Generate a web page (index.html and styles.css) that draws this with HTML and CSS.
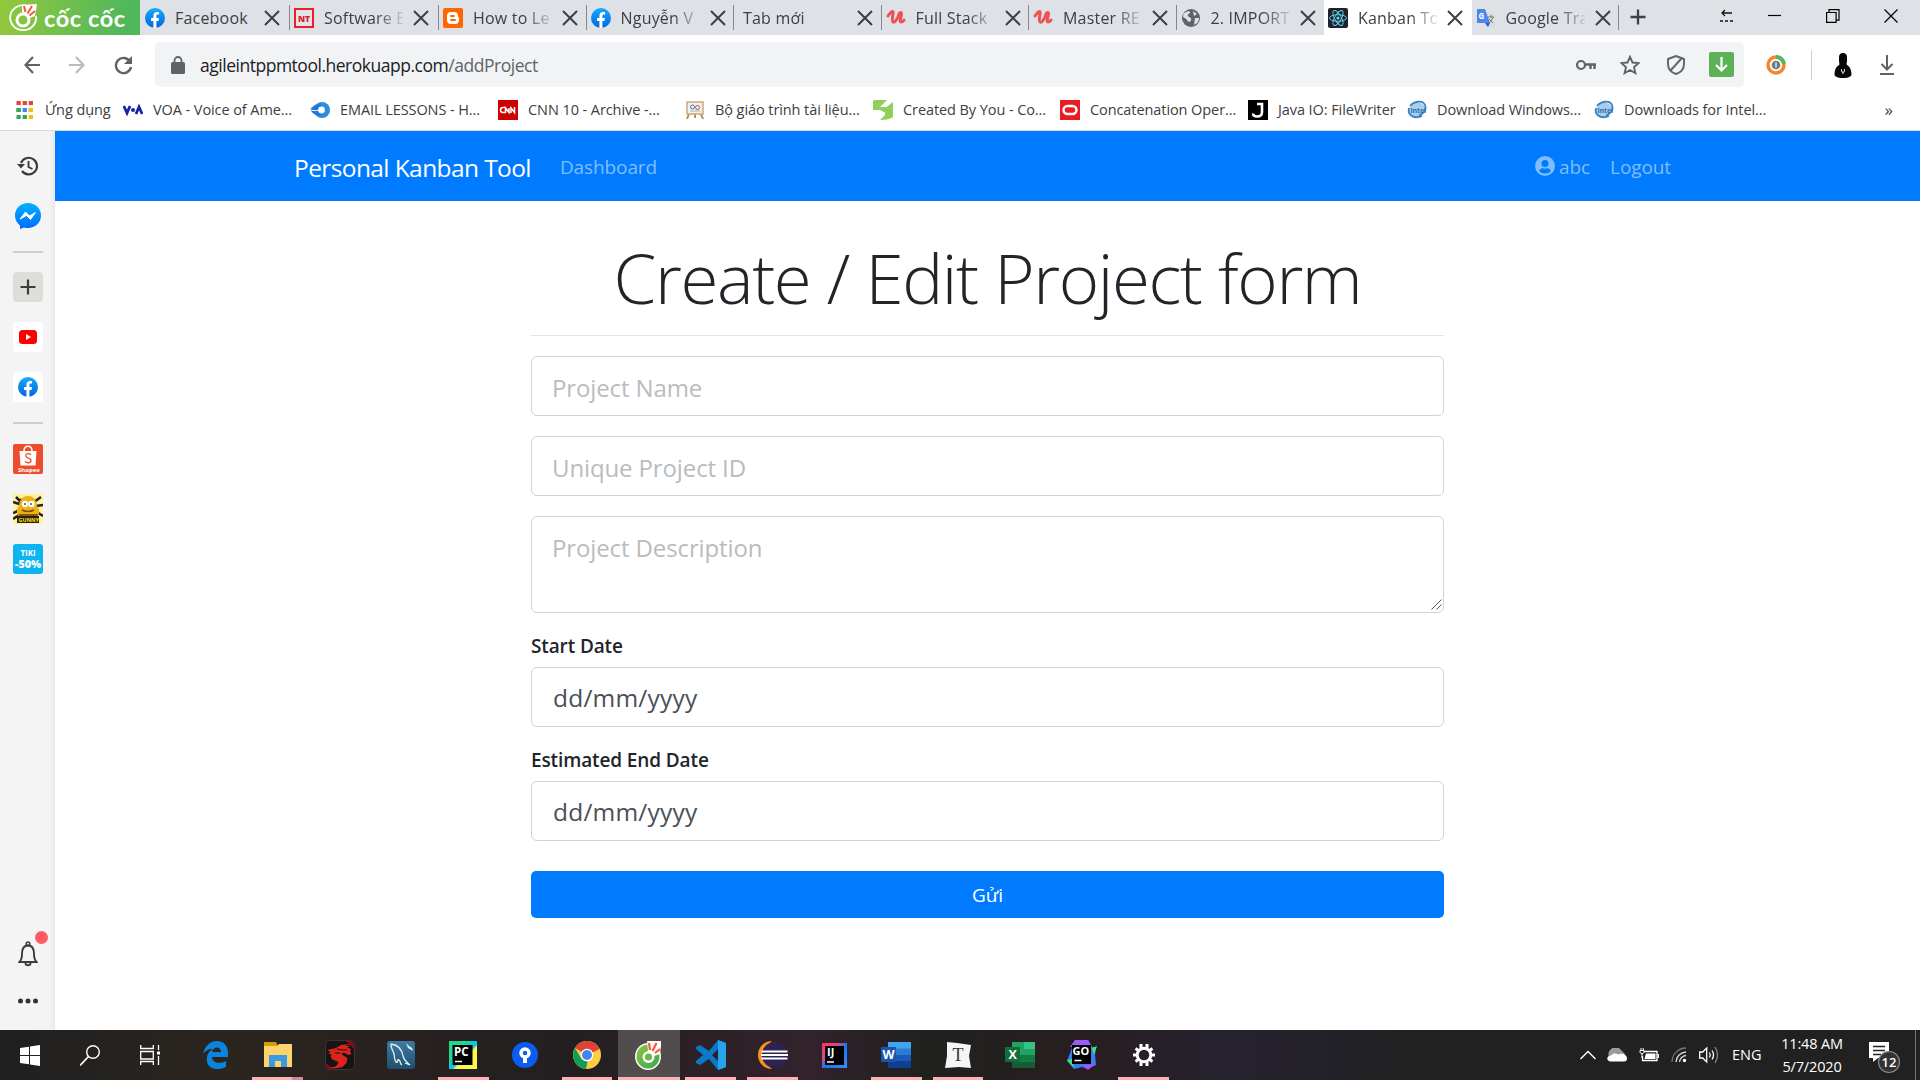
FILE: index.html
```html
<!DOCTYPE html>
<html lang="vi">
<head>
<meta charset="utf-8">
<title>Kanban Tool</title>
<link rel="stylesheet" href="styles.css">
</head>
<body>
<svg class="defs" width="0" height="0" aria-hidden="true">
  <defs>
    <linearGradient id="g-fb" x1="0" y1="0" x2="0" y2="1"><stop offset="0" stop-color="#18acfe"/><stop offset="1" stop-color="#0163e0"/></linearGradient>
    <linearGradient id="g-ms" x1="0" y1="0" x2="0" y2="1"><stop offset="0" stop-color="#00b2ff"/><stop offset="1" stop-color="#006aff"/></linearGradient>
    <linearGradient id="g-my" x1="0" y1="0" x2="0" y2="1"><stop offset="0" stop-color="#3d7ba3"/><stop offset="1" stop-color="#1f4f6c"/></linearGradient>
    <linearGradient id="g-pc" x1="0" y1="0" x2="1" y2="1"><stop offset=".3" stop-color="#21d789"/><stop offset=".55" stop-color="#07c3f2"/><stop offset=".6" stop-color="#fcf84a"/></linearGradient>
    <linearGradient id="g-ij" x1="0" y1="0" x2="1" y2="1"><stop offset="0" stop-color="#fe315d"/><stop offset=".3" stop-color="#e8457a"/><stop offset=".55" stop-color="#087cfa"/><stop offset="1" stop-color="#3f8cf0"/></linearGradient>
    <linearGradient id="g-cc" x1="0" y1="0" x2="1" y2="1"><stop offset="0" stop-color="#8cc63f"/><stop offset="1" stop-color="#3aa655"/></linearGradient>
  </defs>
  <symbol id="close" viewBox="0 0 16 16"><path d="M1 1l14 14M15 1L1 15" stroke="#3c4043" stroke-width="2" fill="none"/></symbol>
  <symbol id="fb" viewBox="0 0 20 20"><circle cx="10" cy="10" r="10" fill="url(#g-fb)"/><path d="M8.400 20v-7H6v-3h2.400V7.900c0-2.600 1.400-3.900 3.700-3.900.9 0 1.900.2 1.900.2v2.400h-1.200c-1.100 0-1.400.7-1.400 1.400v2H14l-.5 3h-2.100v7z" fill="#fff"/></symbol>
  <symbol id="udemy" viewBox="0 0 20 20"><path d="M2 8c2-3 4-5 5-4.500S5 13 7 14s5-4 6-8c.6-2 2.500-2 2.500 0S13 14 15 14s2-1 3-2" stroke="#ec5252" stroke-width="3" fill="none" stroke-linecap="round"/></symbol>
  <symbol id="intel" viewBox="0 0 20 20"><ellipse cx="10" cy="10" rx="8.500" ry="7" fill="#a9cdea" transform="rotate(-20 10 10)"/><path d="M3 6C7 1 16 0 18 5s-2 9-6 10.500M2 8c-2 8 6 11 13 8" stroke="#3784c5" stroke-width="1.800" fill="none"/><text x="3.500" y="12.500" font-size="7" font-weight="bold" fill="#2f6fad">intel</text></symbol>
</svg>

<div class="browser">
  <header class="tabs">
    <div class="logo">
      <svg width="30" height="30" viewBox="0 0 30 30"><path d="M17 2.500A13 12.500 0 1 0 27 13" fill="none" stroke="#fff" stroke-width="1.800"/><path d="M13 2l15-1-2 12-5 2-8-6z" fill="#fff"/><circle cx="14" cy="17" r="6" fill="#83c340" stroke="#fff" stroke-width="3"/><path d="M16.500 9L15 3M18.500 10.500L23 3M20.500 12.500L26 8" stroke="#f15a3a" stroke-width="2"/></svg>
      <span class="brand">cốc cốc</span>
    </div>
    <div class="tab wide"><svg class="fav"><use href="#fb"/></svg><span class="ttl">Facebook</span><svg class="x"><use href="#close"/></svg></div>
    <div class="tab wide"><svg class="fav" viewBox="0 0 20 20"><path d="M1 1h18v18H1z" fill="#e6e2e6" stroke="#e3212f" stroke-width="2"/><text x="4" y="13.500" font-size="8.500" font-weight="900" fill="#d5202c">NT</text></svg><span class="ttl">Software E</span><svg class="x"><use href="#close"/></svg></div>
    <div class="tab"><svg class="fav" viewBox="0 0 20 20"><rect width="20" height="20" rx="2" fill="#ff6600"/><path d="M4 8a4 4 0 0 1 4-4h3a4 4 0 0 1 4 4c0 1 1 1 1 2v2a4 4 0 0 1-4 4H8a4 4 0 0 1-4-4z" fill="#fff"/><path d="M8 8h3M8 12h4" stroke="#ff6600" stroke-width="1.800" stroke-linecap="round"/></svg><span class="ttl">How to Le</span><svg class="x"><use href="#close"/></svg></div>
    <div class="tab"><svg class="fav"><use href="#fb"/></svg><span class="ttl">Nguyễn V</span><svg class="x"><use href="#close"/></svg></div>
    <div class="tab plain"><span class="ttl">Tab mới</span><svg class="x"><use href="#close"/></svg></div>
    <div class="tab"><svg class="fav"><use href="#udemy"/></svg><span class="ttl">Full Stack</span><svg class="x"><use href="#close"/></svg></div>
    <div class="tab"><svg class="fav"><use href="#udemy"/></svg><span class="ttl">Master RE</span><svg class="x"><use href="#close"/></svg></div>
    <div class="tab noline"><svg class="fav" viewBox="0 0 20 20"><circle cx="10" cy="10" r="9" fill="#5f6368"/><path d="M5 4c3-2 5 0 4 1S6 6 7 8s4 1 3 4-3 2-4 0-4-2-4-4 1-3 3-4zM12 3l4 3-3 2zM14 10h4c0 4-3 6-5 7z" fill="#dee1e6"/></svg><span class="ttl">2. IMPORT</span><svg class="x"><use href="#close"/></svg></div>
    <div class="tab active"><svg class="fav" viewBox="0 0 20 20"><rect width="20" height="20" rx="2" fill="#20232a"/><g fill="none" stroke="#61dafb" stroke-width=".9"><ellipse cx="10" cy="10" rx="8.500" ry="3.300"/><ellipse cx="10" cy="10" rx="8.500" ry="3.300" transform="rotate(60 10 10)"/><ellipse cx="10" cy="10" rx="8.500" ry="3.300" transform="rotate(120 10 10)"/></g><circle cx="10" cy="10" r="1.600" fill="#61dafb"/></svg><span class="ttl">Kanban To</span><svg class="x"><use href="#close"/></svg></div>
    <div class="tab"><svg class="fav" viewBox="0 0 20 20"><path d="M9 5h10v14h-8z" fill="#dcdcdc"/><path d="M1 1h8l5 14H1z" fill="#4a86f0"/><path d="M9 15h5l-2 4z" fill="#2c57c8"/><text x="2.500" y="10.500" font-size="8" font-weight="bold" fill="#fff">G</text><path d="M12 9h6M15 7v2M17 9c-1 3-2 4-4 6M13 11l4 4" stroke="#707a80" fill="none"/></svg><span class="ttl">Google Tra</span><svg class="x"><use href="#close"/></svg></div>
    <svg class="newtab" width="16" height="16" viewBox="0 0 16 16"><path d="M8 .500v15M.5 8h15" stroke="#3c4043" stroke-width="2.300"/></svg>
    <div class="winbtns">
      <svg width="14" height="14" viewBox="0 0 14 14"><path d="M12 4H2M5 1L2 4l3 3" fill="none" stroke="#111" stroke-width="1.300"/><path d="M0 12h13.500" stroke="#111" stroke-width="1.700" stroke-dasharray="3 2"/></svg>
      <svg width="14" height="14" viewBox="0 0 14 14"><path d="M0 6.500h13" stroke="#000" stroke-width="1.200"/></svg>
      <svg width="14" height="14" viewBox="0 0 14 14"><path d="M.6 3.500h9.500v9.900H.6zM3 3.500V.6h10v10.500h-2.900" fill="none" stroke="#000" stroke-width="1.200"/></svg>
      <svg width="14" height="14" viewBox="0 0 14 14"><path d="M.5.500l13 13M13.500.500l-13 13" stroke="#000" stroke-width="1.200"/></svg>
    </div>
  </header>

  <div class="toolbar">
    <svg width="16" height="18" viewBox="0 0 16 18"><path d="M16 9H1.500M9 1L1.500 9 9 17" fill="none" stroke="#5f6368" stroke-width="2.200"/></svg>
    <svg width="16" height="18" viewBox="0 0 16 18"><path d="M0 9h14.500M7 1l7.500 8L7 17" fill="none" stroke="#babcbe" stroke-width="2.200"/></svg>
    <svg width="19" height="19" viewBox="0 0 19 19"><path d="M16 5.500A7.600 7.600 0 1 0 17 11" fill="none" stroke="#5f6368" stroke-width="2.400"/><path d="M18 0v8h-8z" fill="#5f6368"/></svg>
    <div class="omnibox">
      <svg width="14" height="18" viewBox="0 0 14 18"><rect y="6" width="14" height="12" rx="1.500" fill="#5f6368"/><path d="M3.500 7V4.500a3.500 3.500 0 0 1 7 0V7" fill="none" stroke="#5f6368" stroke-width="1.800"/></svg>
      <span class="url"><b>agileintppmtool.herokuapp.com</b>/addProject</span>
      <div class="omni-icons">
        <svg width="20" height="12" viewBox="0 0 20 12"><circle cx="5" cy="6" r="4" fill="none" stroke="#5f6368" stroke-width="2.200"/><path d="M9 5.500h11M14.500 5.500v4.500M18.500 5.500v4.500" stroke="#5f6368" stroke-width="2.400"/></svg>
        <svg width="20" height="20" viewBox="0 0 20 20"><path d="M10 1.800l2.500 5.700 6.100.6-4.600 4.100 1.400 6L10 15l-5.400 3.200 1.400-6L1.400 8.100l6.100-.6z" fill="none" stroke="#5f6368" stroke-width="1.900"/></svg>
        <svg width="20" height="20" viewBox="-2 0 20 20"><path d="M9 1l8 3v5c0 5-3.500 8.500-8 10-4.500-1.500-8-5-8-10V4zM3.500 15.500l11-12" fill="none" stroke="#5f6368" stroke-width="1.900"/></svg>
        <svg width="25" height="25" viewBox="0 0 25 25"><rect width="25" height="25" rx="2" fill="#5cb357"/><path d="M12.500 5v13M7 13l5.500 5.500L18 13" fill="none" stroke="#fff" stroke-width="2.200"/></svg>
      </div>
    </div>
    <div class="exts">
      <svg width="20" height="20" viewBox="0 0 20 20"><circle cx="10" cy="10" r="8" fill="none" stroke="#f5842a" stroke-width="3.400"/><path d="M10 2a8 8 0 0 1 8 7" fill="none" stroke="#56b45d" stroke-width="4"/><circle cx="10" cy="10" r="4.300" fill="#777"/><path d="M10 7.500v5" stroke="#fff" stroke-width="1.200"/></svg>
      <i class="vline"></i>
      <svg class="person" width="18" height="25" viewBox="0 0 18 25"><path d="M9 0c3 0 4 2 4 4v4c0 2-1 3 0 4 4 3 4 5 4.500 9 .2 2-2 4-8.500 4S.3 23 .5 21C1 17 1 15 5 12c1-1 0-2 0-4V4c0-2 1-4 4-4z" fill="#080808"/><path d="M7.500 16v2c0 2 3 2 3 0v-2M9 18v3" stroke="#ddd" fill="none"/></svg>
      <svg width="14" height="20" viewBox="0 0 14 20"><path d="M7 0v14M1.500 9L7 14.500 12.500 9M0 19h14" fill="none" stroke="#5f6368" stroke-width="2"/></svg>
    </div>
  </div>

  <nav class="bookmarks">
    <div class="bm"><svg width="20" height="20" viewBox="0 0 20 20"><path d="M1.500 3h16.500" stroke="#ea4335" stroke-width="4" stroke-dasharray="4.300 1.800"/><path d="M1.500 10h16.500" stroke="#4285f4" stroke-width="4" stroke-dasharray="4.300 1.800"/><path d="M1.500 10h4.300M1.500 17h10.400" stroke="#34a853" stroke-width="4" stroke-dasharray="4.300 1.800"/><path d="M13.700 10H18M13.700 17H18" stroke="#fbbc05" stroke-width="4"/></svg><span>Ứng dụng</span></div>
    <div class="bm"><svg width="20" height="20" viewBox="0 0 20 20"><path d="M.8 6L4 13l3-7M13 14l3-7 3.200 7" fill="none" stroke="#1a22a8" stroke-width="2.800"/><circle cx="10" cy="10" r="2" fill="#1a22a8"/></svg><span>VOA - Voice of Ame...</span></div>
    <div class="bm"><svg width="20" height="20" viewBox="0 0 20 20"><circle cx="12" cy="10" r="8" fill="#2d8be0"/><path d="M0 9l5-4 6-.5v11C5 16 2 13 0 9z" fill="#1f78d1"/><circle cx="11.500" cy="10" r="3.400" fill="#fff"/><path d="M0 9c3 2 5 2 9 1" stroke="#fff" fill="none"/></svg><span>EMAIL LESSONS - H...</span></div>
    <div class="bm"><svg width="20" height="20" viewBox="0 0 20 20"><path d="M0 0h20v20H0z" fill="#c00"/><path d="M7 7.500H5q-2.500 0-2.500 2.500t2.500 2.500h2.500V8l3.500 4.500V8M13 13V8l3.500 4.500V7" fill="none" stroke="#fff" stroke-width="1.500"/></svg><span>CNN 10 - Archive -...</span></div>
    <div class="bm"><svg width="20" height="20" viewBox="0 0 20 20"><path d="M4 14L2 19M16 14l2 5M10 14v4M2 3h16" stroke="#b98b60" stroke-width="2"/><path d="M2 2h16v12H2z" fill="#edf0ee" stroke="#d0a67c" stroke-width="1.500"/><circle cx="7.500" cy="7" r="2" fill="none" stroke="#497cab"/><circle cx="12.500" cy="7.500" r="2" fill="none" stroke="#d34747"/><path d="M5 11h10" stroke="#a7b5bd"/></svg><span>Bộ giáo trình tài liệu...</span></div>
    <div class="bm"><svg width="20" height="20" viewBox="0 0 20 20"><path d="M0 1Q0 0 5 0h9L7 7h6v6L7 10H0zM20 2v15q-3 3-13 3l5-5V9h-1z" fill="#8fd05b"/></svg><span>Created By You - Co...</span></div>
    <div class="bm"><svg width="20" height="20" viewBox="0 0 20 20"><path d="M0 0h20v20H0z" fill="#ea1b22"/><rect x="3.500" y="6" width="13" height="8" rx="4" fill="none" stroke="#fff" stroke-width="2.400"/></svg><span>Concatenation Oper...</span></div>
    <div class="bm"><svg width="20" height="20" viewBox="0 0 20 20"><path d="M0 0h20v20H0z"/><path d="M9 4h5v8q0 4.500-5 4.500-4 0-4-3" fill="none" stroke="#fff" stroke-width="2.600"/></svg><span>Java IO: FileWriter</span></div>
    <div class="bm"><svg width="20" height="20"><use href="#intel"/></svg><span>Download Windows...</span></div>
    <div class="bm"><svg width="20" height="20"><use href="#intel"/></svg><span>Downloads for Intel...</span></div>
    <div class="more">»</div>
  </nav>

  <div class="main">
    <aside class="side">
      <svg width="21" height="20" viewBox="0 0 21 20"><path d="M4 7a8.300 8.300 0 1 1 1 8" fill="none" stroke="#3c3c3c" stroke-width="2.200"/><path d="M0 8h8l-4 4.500z" fill="#3c3c3c"/><path d="M11.500 5v6l4 2" fill="none" stroke="#3c3c3c" stroke-width="1.900"/></svg>
      <svg class="s-ms" width="26" height="26" viewBox="0 0 26 26"><path d="M13 0c7 0 13 5 13 12.500S20 25 13 25c-1.500 0-3-.2-4-.6L5 26v-3.500C2 20 0 17 0 12.500 0 5 6 0 13 0z" fill="url(#g-ms)"/><path d="M5 16l5.500-7 4 4L20.500 9.500 15.500 16.500l-4-4z" fill="#fff" stroke="#fff"/></svg>
      <i class="rule r1"></i>
      <div class="tile plus"><svg width="16" height="16" viewBox="0 0 16 16"><path d="M8 .5v15M.5 8h15" stroke="#3c3c3c" stroke-width="2.200"/></svg></div>
      <div class="tile"><svg width="18" height="14" viewBox="0 0 18 14"><rect width="18" height="14" rx="3.500" fill="red"/><path d="M7 4l5 3-5 3z" fill="#fff"/></svg></div>
      <div class="tile"><svg width="20" height="20"><use href="#fb"/></svg></div>
      <i class="rule r2"></i>
      <svg class="s-app" width="30" height="30" viewBox="0 0 30 30"><rect width="30" height="30" rx="2" fill="#ee4d2d"/><path d="M6.500 7h17l-1 14.500h-15z" fill="#fff"/><path d="M11 7c0-6.500 8-6.500 8 0" fill="none" stroke="#fff" stroke-width="1.500"/><path d="M18 10.500c-4-2-6 0-5 2s5 1.500 5 4-4 3-6 1" fill="none" stroke="#ee4d2d" stroke-width="1.400"/><text x="5" y="28" font-size="6" font-weight="bold" fill="#fff">Shopee</text></svg>
      <svg class="s-app" width="30" height="30" viewBox="0 0 30 30"><path d="M0 0h30v30H0z" fill="#fff3a0"/><path d="M0 8l6 2 3-5M0 19l9-4M21 8l7-5M23 12l7-1M22 17l8 5M0 25l6-4M3 3l5 5" stroke="#222" stroke-width="2.500" fill="none"/><path d="M15 2c6 0 9 5 9 10 2 2 3 6 1 10H5c-2-4-1-8 1-10 0-5 3-10 9-10z" fill="#efb11c"/><path d="M5 20h20l-1 3H7z" fill="#8a5608"/><path d="M9 16c4 2 8 2 12 0" stroke="#7a4d08" stroke-width="1.500" fill="none"/><circle cx="12" cy="10" r="3.200" fill="#fff"/><circle cx="18.500" cy="10" r="3.200" fill="#fff"/><path d="M12 9v2M18 9v2" stroke="#000"/><path d="M4 22h22v7H4z" fill="#2a2010"/><text x="5.500" y="28" font-size="5.500" font-weight="bold" fill="#ffe22a">GUNNY</text></svg>
      <svg class="s-app" width="30" height="30" viewBox="0 0 30 30"><rect width="30" height="30" rx="3" fill="#0db4ef"/><text x="15" y="12" font-size="8" text-anchor="middle" font-weight="bold" fill="#fff">TIKI</text><text x="15" y="24" font-size="10" text-anchor="middle" font-weight="800" textLength="26" lengthAdjust="spacingAndGlyphs" fill="#fff">-50%</text></svg>
      <div class="bell"><svg width="20" height="26" viewBox="0 0 20 26"><path d="M1.500 21c2-2 2.500-4 2.500-8 0-5 2-8.500 6-8.500s6 3.500 6 8.500c0 4 .5 6 2.500 8zM7.500 22c0 3 5 3 5 0" fill="none" stroke="#3c3c3c" stroke-width="1.900"/><circle cx="10" cy="2.800" r="1.800" fill="none" stroke="#3c3c3c" stroke-width="1.600"/></svg><i class="dot"></i></div>
      <svg class="dots" width="20" height="6" viewBox="0 0 20 6"><circle cx="2.500" cy="3" r="2.500" fill="#333"/><circle cx="10" cy="3" r="2.500" fill="#333"/><circle cx="17.500" cy="3" r="2.500" fill="#333"/></svg>
    </aside>

    <div class="page">
      <nav class="navbar">
        <a class="brandname">Personal Kanban Tool</a>
        <a class="link dash">Dashboard</a>
        <div class="user">
          <svg width="20" height="20" viewBox="0 0 20 20"><circle cx="10" cy="10" r="10" fill="#80bdff"/><circle cx="10" cy="7.600" r="3.500" fill="#007bff"/><path d="M4.200 15.300c.3-2 1.800-3 3.600-3 1.500.6 3 .6 4.400 0 1.800 0 3.300 1 3.600 3-3 3-8.600 3-11.600 0z" fill="#007bff"/></svg>
          <a class="link abc">abc</a>
          <a class="link logout">Logout</a>
        </div>
      </nav>
      <form class="form">
        <h1>Create / Edit Project form</h1>
        <hr>
        <div class="input">Project Name</div>
        <div class="input">Unique Project ID</div>
        <div class="input area">Project Description<svg class="grip" width="11" height="11" viewBox="0 0 11 11"><path d="M.5 10.500l10-10M5.500 10.500l5-5" stroke="#555" stroke-width="1"/></svg></div>
        <label>Start Date</label>
        <div class="input date">dd/mm/yyyy</div>
        <label>Estimated End Date</label>
        <div class="input date">dd/mm/yyyy</div>
        <button type="button">Gửi</button>
      </form>
    </div>
  </div>

  <footer class="taskbar">
    <div class="app sys"><svg width="20" height="21" viewBox="0 0 20 21"><path d="M0 3l9-1.300V10H0zM10 1.500L20 0v10H10zM0 11h9v8.300L0 18zM10 11h10v10l-10-1.500z" fill="#fff"/></svg></div>
    <div class="app sys"><svg width="20" height="21" viewBox="0 0 20 21"><circle cx="13" cy="7" r="6.300" fill="none" stroke="#fff" stroke-width="1.400"/><path d="M8.500 11.500L0 20.500" stroke="#fff" stroke-width="1.700"/></svg></div>
    <div class="app sys"><svg width="20" height="20" viewBox="0 0 20 20"><path d="M.7 0v3.500h12.600V0M.7 6.500h12.600v7.500H.7zM.7 20v-3.500h12.600V20M18.500 0v5M18.500 11v9" fill="none" stroke="#fff" stroke-width="1.300"/><path d="M17 6.500h3v3h-3z" fill="#fff"/></svg></div>
    <div class="app first"><svg width="26" height="28" viewBox="0 0 26 28"><path d="M0 13C2 4 8 0 14 0c7 0 11 5 11 12v4H9c0 5 6 8 14 4v6c-10 5-21 1-19-10 1-5 4-7 6-8-5 0-8 2-10 5zM9 11h9c0-6-8-6-9 0z" fill="#0a84dd"/></svg></div>
    <div class="app run stack"><svg width="28" height="26" viewBox="0 0 28 26"><path d="M0 0h12l2 4H0z" fill="#d99a08"/><path d="M0 4h13l2-2h13v23H0z" fill="#fdd36b"/><path d="M5 25V13h18v12h-6v-6h-6v6z" fill="#3b9be2"/></svg></div>
    <div class="app"><svg width="30" height="30" viewBox="0 0 30 30"><rect x=".5" y=".5" width="29" height="29" rx="4" fill="#171415" stroke="#3c3334"/><path d="M20 .5h6l3.500 4v5zM.5 23v3l3.500 3.500h5z" fill="#810f1d"/><path d="M2 10l9-2 5-3 9-1-5 2 5 0-3 1.500 4 1.500-1 2 1.500 3-3 1-4-2-3 0 1 2 5 3-1 5-4 4-7 1.500-6-1 6-1 3-3-1-2-5-2-2-3 1-2-3-1 2-1.500z" fill="#dc231e"/><path d="M12 9l6 1 4 0M10 13l5 0" stroke="#171415" fill="none"/></svg></div>
    <div class="app"><svg width="28" height="28" viewBox="0 0 28 28"><rect width="28" height="28" rx="3" fill="url(#g-my)"/><path d="M4 3c8 1 11 6 12 12 1 5 4 6 7 9l-5-2M4 3c-1 3 2 6 3 10s0 6 2 8 1-4 3-2 1 4 3 5" fill="none" stroke="#e3eff5" stroke-width="1.300"/><path d="M19 2l2 5 5 3-1-3-3-2z" fill="#e3eff5"/></svg></div>
    <div class="app run"><svg width="28" height="28" viewBox="0 0 28 28"><path d="M0 0h28v28H0z" fill="url(#g-pc)"/><path d="M3.500 4h20v20h-20z"/><text x="5" y="15" font-size="11.500" font-weight="bold" fill="#fff">PC</text><path d="M6 20.500h7" stroke="#fff" stroke-width="1.500"/></svg></div>
    <div class="app"><svg width="26" height="26" viewBox="0 0 26 26"><circle cx="13" cy="13" r="13" fill="#0b5cf0"/><circle cx="13" cy="11" r="4" fill="none" stroke="#fff" stroke-width="3.500"/><path d="M11 14h4v7h-4z" fill="#fff"/></svg></div>
    <div class="app run"><svg width="28" height="28" viewBox="0 0 28 28"><circle cx="14" cy="14" r="14" fill="#ffcd40"/><path d="M14 14L2 7a14 14 0 0 1 24.500 1z" fill="#db4437"/><path d="M14 8h12.500A14 14 0 0 0 2 7z" fill="#db4437"/><path d="M2 7l6.500 11 6 3L13 28A14 14 0 0 1 2 7z" fill="#0f9d58"/><circle cx="14" cy="14" r="6.300" fill="#fff"/><circle cx="14" cy="14" r="5" fill="#4285f4"/></svg></div>
    <div class="app run on"><svg width="27" height="30" viewBox="0 0 27 30"><ellipse cx="13" cy="16.500" rx="13" ry="13.500" fill="#fff"/><ellipse cx="13" cy="16.500" rx="11.500" ry="12" fill="url(#g-cc)"/><path d="M12 1l14 0 0 5-1 8-6 2-6-5z" fill="#fff"/><circle cx="13.500" cy="17" r="4.800" fill="#6cb944" stroke="#fff" stroke-width="2.400"/><path d="M15 10l-1-7M17.500 11l4-8M20 13l5-4" stroke="#ef5a34" stroke-width="2.200"/></svg></div>
    <div class="app run"><svg width="30" height="30" viewBox="0 0 30 30"><path d="M22 0l8 3v24l-8 3-9-11-9 6-4-2v-2l7-6-7-6V7l4-2 9 6zM22 9l-6 6 6 6z" fill="#0b79c8"/><path d="M22 0l8 3v24l-8 3z" fill="#27a2ee"/></svg></div>
    <div class="app run"><svg width="30" height="28" viewBox="0 0 30 28"><path d="M14 0a14 14 0 1 0 0 28A17 17 0 0 1 14 0z" fill="#f7941e"/><circle cx="16.500" cy="14" r="12.800" fill="#2c2255"/><path d="M3.500 10.500h26M3 14h27M3.500 17.500h26" stroke="#fff" stroke-width="2"/></svg></div>
    <div class="app"><svg width="25" height="25" viewBox="0 0 25 25"><path d="M0 0h25v25H0z" fill="url(#g-ij)"/><path d="M3 3h19v19H3z"/><text x="5" y="13" font-size="11" font-weight="bold" fill="#fff">IJ</text><path d="M5 19h7" stroke="#fff" stroke-width="1.500"/></svg></div>
    <div class="app run"><svg width="30" height="26" viewBox="0 0 30 26"><path d="M7 0h23v7H7z" fill="#41a5ee"/><path d="M7 6.500h23V13H7z" fill="#2b7cd3"/><path d="M7 13h23v6.500H7z" fill="#185abd"/><path d="M7 19.500h23V26H7z" fill="#103f91"/><rect y="5" width="15" height="15" fill="#1b55ae"/><text x="1.500" y="17" font-size="12.500" font-weight="bold" fill="#fff">W</text></svg></div>
    <div class="app run"><svg width="28" height="28" viewBox="0 0 28 28"><path d="M3 1l10 1 14 2-2 11 2 12-12-1-14 1 2-12z" fill="#f5f5f5"/><text x="8.500" y="20" font-size="18" class="serif" fill="#333">T</text></svg></div>
    <div class="app"><svg width="30" height="26" viewBox="0 0 30 26"><path d="M7 0h23v26H7z" fill="#21a366"/><path d="M19 0h11v7H19z" fill="#33c481"/><path d="M7 13h12v6H7z" fill="#107c41"/><path d="M7 19.500h23V26H7z" fill="#185c37"/><path d="M19 13h11v6.500H19z" fill="#107c41"/><rect y="5" width="15" height="15" fill="#0e6f3b"/><text x="3.500" y="17" font-size="12.500" font-weight="bold" fill="#fff">X</text></svg></div>
    <div class="app"><svg width="30" height="30" viewBox="0 0 30 30"><path d="M8 0h13l4 7 4 0-1 8 1 10-9 4-5-2-8 2-7-8z" fill="#3b7cf5"/><path d="M8 0h13l4 7H3z" fill="#9b5cf5"/><path d="M25 8l5-2-3 9zM0 20l5-1 2 9z" fill="#3bea62"/><path d="M16 25h11l-6 5z" fill="#b74af7"/><path d="M5 5h19v19H5z"/><text x="5.500" y="15" font-size="11" font-weight="bold" fill="#fff">GO</text><path d="M7.500 20.500h7" stroke="#fff" stroke-width="1.500"/></svg></div>
    <div class="app run"><svg width="24" height="24" viewBox="0 0 24 24"><circle cx="12" cy="12" r="6.800" fill="none" stroke="#fff" stroke-width="3"/><path d="M9 1v4M15 1v4M9 19v4M15 19v4M1 12h3M20 12h3M3.500 5.500l3 2M17.500 16.500l3 2M3.500 18.500l3-2M17.500 7.500l3-2" stroke="#fff" stroke-width="3"/></svg></div>
    <div class="tray">
      <svg width="16" height="10" viewBox="0 0 16 10"><path d="M.5 9L8 1.500 15.500 9" fill="none" stroke="#fff" stroke-width="1.400"/></svg>
      <svg width="20" height="14" viewBox="0 0 20 14"><path d="M2 9a7 7 0 0 1 12-7l4 4-5 5z" fill="#9b9b9b"/><path d="M4 13.500c-5 0-5-6 0-6 3-3 5-2 7-1 4-2 9 0 9 4 0 2-1 3-3 3z" fill="#fff"/></svg>
      <svg width="20" height="14" viewBox="0 0 20 14"><path d="M5 3.500h13v9H3.500V8M19.500 6v4" fill="none" stroke="#fff" stroke-width="1.300"/><path d="M7 5.500h9.500v5.500H5.500z" fill="#fff"/><path d="M1 2.500h4v2q-2 3-4 0zM2 0v2.500M4.200 0v2.500M3 6v4" fill="none" stroke="#fff"/></svg>
      <svg width="16" height="16" viewBox="0 0 16 16"><path d="M1 15A14 14 0 0 1 15 1" fill="none" stroke="#777" stroke-width="1.300"/><path d="M5 15A10.500 10.500 0 0 1 15 5M8.500 15A7 7 0 0 1 15 8.500" fill="none" stroke="#ddd" stroke-width="1.300"/><circle cx="13.500" cy="13.500" r="1.700" fill="#fff"/></svg>
      <svg width="20" height="18" viewBox="0 0 20 18"><path d="M.7 6h3l4-4v14l-4-4h-3zM10.500 6.500q1.500 2.500 0 5M13 4.500q3 4.500 0 9" fill="none" stroke="#fff" stroke-width="1.300"/><path d="M16 1q5 8 0 16" fill="none" stroke="#888" stroke-width="1.300"/></svg>
      <span class="lang">ENG</span>
      <div class="clock"><span>11:48 AM</span><span>5/7/2020</span></div>
      <svg class="note" width="32" height="32" viewBox="0 0 32 32"><path d="M0 0h20v16H9l-5 4v-4H0z" fill="#fff"/><path d="M4 4.500h12M4 8.500h12M4 12.500h8" stroke="#222" stroke-width="1.300"/><circle cx="20" cy="20" r="10.500" fill="#333" stroke="#888" stroke-width="1.200"/><text x="20" y="25" font-size="13" text-anchor="middle" font-weight="600" fill="#fff">12</text></svg>
      <i class="peek"></i>
    </div>
  </footer>
</div>
</body>
</html>
```
FILE: styles.css
```css
* { box-sizing: border-box; }
body { margin: 0; background: #fff; color: #3c4043; font: 15px/20px "Open Sans", "Noto Sans", sans-serif; overflow: hidden; }
svg { display: block; flex: none; }
.defs { position: absolute; }
i { display: block; flex: none; }
.browser { width: 1920px; height: 1080px; display: flex; flex-direction: column; }

/* tab strip */
.tabs { height: 35px; display: flex; background: #dee1e6; flex: none; }
.logo { width: 140px; margin-right: 1px; padding-left: 9px; display: flex; align-items: center; gap: 5px; background: linear-gradient(100deg, #93c83d, #4fb75c 90%); }
.brand { color: #fff; font: 700 23.500px/34px "Lato", sans-serif; letter-spacing: .6px; white-space: nowrap; }
.tab { width: 147.500px; flex: none; display: flex; align-items: center; padding-left: 4px; position: relative; }
.tab.wide { width: 149px; }
.tab::after { content: ""; position: absolute; right: 0; top: 5px; height: 25px; width: 1px; background: #85888c; }
.tab.active { background: #fff; }
.tab.active::after, .tab.noline::after { display: none; }
.fav { width: 20px; height: 20px; margin-right: 10px; }
.ttl { width: 79px; overflow: hidden; white-space: nowrap; font-size: 16px; line-height: 26px; letter-spacing: .2px; -webkit-mask-image: linear-gradient(90deg, #000 65%, transparent 105%); }
.tab:nth-child(2) .ttl { -webkit-mask-image: none; }
.tab.plain { padding-left: 9px; }
.tab.plain .ttl { width: 104px; }
.x { width: 16px; height: 16px; margin-left: 10px; }
.newtab { margin: 9px 0 0 11px; }
.winbtns { margin-left: auto; width: 200px; padding-right: 22px; display: flex; align-items: center; justify-content: space-between; height: 32px; }
.winbtns svg:first-child { margin-right: -10px; }

/* toolbar */
.toolbar { height: 60px; flex: none; display: grid; grid-template-columns: 45px 45px 41px 1589px 1fr; align-items: center; padding-left: 24px; }
.omnibox { height: 45px; margin: -1px 0 0; background: #f1f3f4; border-radius: 5px; display: flex; align-items: center; padding: 0 10px 0 16px; }
.url { margin-left: 15px; font-size: 17.500px; letter-spacing: -.48px; color: #5f6368; }
.url b { font-weight: 400; color: #202124; }
.omni-icons { margin-left: auto; width: 158px; display: flex; align-items: center; justify-content: space-between; }
.exts { display: flex; align-items: center; justify-content: space-between; padding: 0 26px 0 22px; }
.vline { width: 1px; height: 30px; background: #d0d0d0; margin-right: -2px; }
.person { margin-right: 3px; }

/* bookmarks */
.bookmarks { height: 36px; flex: none; display: grid; grid-template-columns: 108px 187px 188px 187px 188px 187px 188px 159px 187px 160px 1fr; padding: 0 27px 6px 15px; align-items: center; border-bottom: 1px solid #dadce0; }
.bm { display: flex; align-items: center; gap: 10px; white-space: nowrap; font-size: 14.500px; letter-spacing: -.08px; }
.more { text-align: right; font-size: 17px; line-height: 20px; }

/* side panel */
.main { flex: 1; display: flex; min-height: 0; }
.side { width: 55px; background: linear-gradient(90deg, #f4f4f4 90%, #e8e8e8); display: flex; flex-direction: column; align-items: center; padding-top: 25px; }
.s-ms { margin-top: 27px; }
.rule { width: 30px; height: 2px; background: #cfcfcf; }
.r1 { margin: 22px 0 19px; }
.r2 { margin: 0 0 20px; }
.tile { width: 30px; height: 30px; border-radius: 4px; background: #fff; display: flex; align-items: center; justify-content: center; margin-bottom: 20px; flex: none; }
.tile.plus { background: #deddda; }
.s-app { margin-bottom: 20px; }
.bell { margin-top: auto; position: relative; }
.dot { position: absolute; width: 13px; height: 13px; border-radius: 50%; background: #ff5a65; left: 17px; top: -10px; }
.dots { margin: 31px 0 26px; }

/* page */
.page { flex: 1; }
.navbar { height: 70px; background: #007bff; display: flex; align-items: center; padding: 0 249px 0 239px; white-space: nowrap; }
.brandname { color: #fff; font-size: 24.500px; line-height: 38px; letter-spacing: -.6px; padding-top: 3px; }
.link { color: #80bdff; font-size: 19px; line-height: 26px; padding-top: 1px; letter-spacing: -.1px; }
.dash { margin-left: 29px; }
.user { margin-left: auto; display: flex; align-items: center; }
.abc { margin: 0 20px 0 4px; }
.form { width: 913px; margin: 31px auto 0; color: #212529; }
h1 { margin: 0; text-align: center; font-weight: 300; font-size: 69px; line-height: 84px; letter-spacing: -1.400px; white-space: nowrap; padding-top: 3px; }
hr { border: 0; border-top: 1px solid #e4e4e5; margin: 16px 0 20px; }
.input { height: 60px; border: 1px solid #ced4da; border-radius: 6px; padding: 0 20px; font-size: 24px; line-height: 61px; letter-spacing: -.12px; color: #b9bcbe; margin-bottom: 20px; position: relative; }
.area { height: 97px; }
.grip { position: absolute; right: 1px; bottom: 2px; }
.date { color: #495057; font-size: 24.500px; letter-spacing: .2px; line-height: 60px; padding-left: 21px; }
label { display: block; font-weight: 600; font-size: 19px; line-height: 30px; letter-spacing: -.12px; margin: -2px 0 6px; }
button { display: block; width: 100%; height: 47px; margin-top: 30px; border: 0; border-radius: 5px; background: #007bff; color: #fff; font: 19px/48px "Open Sans", sans-serif; padding: 0; }

/* taskbar */
.taskbar { height: 50px; flex: none; display: flex; background: linear-gradient(90deg, #202020, #2b2520 12%, #231f20 30%, #32222c 42%, #20211f 48%, #281e20 56%, #262230 64%, #212121 74%); }
.app { width: 61.850px; display: flex; align-items: center; justify-content: center; position: relative; flex: none; }
.sys { width: 60px; }
.first { margin-left: 5px; }
.run::after { content: ""; position: absolute; bottom: 0; left: 5.500px; right: 5.500px; height: 3px; background: #ffb0b3; }
.stack::after { background: linear-gradient(90deg, #ffb0b3 78%, #cc8b8e 78%); }
.on { background: #514d4d; }
.on::after { left: 0; right: 0; }
.serif { font-family: "Liberation Serif", serif; }
.tray { margin-left: auto; display: flex; align-items: center; color: #fff; white-space: nowrap; }
.tray svg { margin-right: 12px; }
.tray svg:first-child { margin-right: 11px; }
.lang { width: 30px; margin: 0 19px 0 1px; font-size: 14.500px; }
.clock { display: flex; flex-direction: column; width: 62px; align-items: center; font-size: 14.500px; letter-spacing: -.15px; line-height: 23px; margin-right: 26px; }
.tray .note { margin: 6px 14px 0 0; }
.peek { width: 1px; height: 50px; background: #777; margin-right: 4px; }
```
